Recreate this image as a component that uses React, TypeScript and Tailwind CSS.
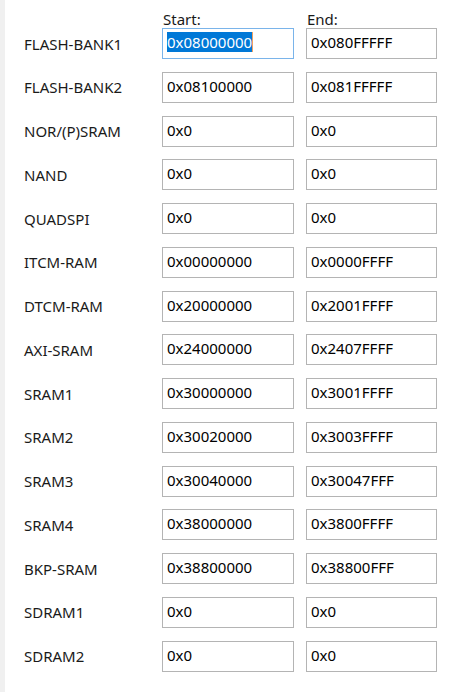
import React from 'react';

const rows: { name: string; start: string; end: string }[] = [
  { name: 'FLASH-BANK1', start: '0x08000000', end: '0x080FFFFF' },
  { name: 'FLASH-BANK2', start: '0x08100000', end: '0x081FFFFF' },
  { name: 'NOR/(P)SRAM', start: '0x0', end: '0x0' },
  { name: 'NAND', start: '0x0', end: '0x0' },
  { name: 'QUADSPI', start: '0x0', end: '0x0' },
  { name: 'ITCM-RAM', start: '0x00000000', end: '0x0000FFFF' },
  { name: 'DTCM-RAM', start: '0x20000000', end: '0x2001FFFF' },
  { name: 'AXI-SRAM', start: '0x24000000', end: '0x2407FFFF' },
  { name: 'SRAM1', start: '0x30000000', end: '0x3001FFFF' },
  { name: 'SRAM2', start: '0x30020000', end: '0x3003FFFF' },
  { name: 'SRAM3', start: '0x30040000', end: '0x30047FFF' },
  { name: 'SRAM4', start: '0x38000000', end: '0x3800FFFF' },
  { name: 'BKP-SRAM', start: '0x38800000', end: '0x38800FFF' },
  { name: 'SDRAM1', start: '0x0', end: '0x0' },
  { name: 'SDRAM2', start: '0x0', end: '0x0' },
];

const Field: React.FC<{ value: string; focused?: boolean; wide?: boolean }> = ({ value, focused, wide }) => (
  <div
    className={`h-[31px] ${wide ? 'w-[132px]' : 'w-[131px]'} border bg-white pl-[4px] pt-[3px] text-[15px] leading-[20px] text-black ${
      focused ? 'border-[#7ab4ea]' : 'border-[#b4b4b4]'
    }`}
  >
    {focused ? (
      <span className="inline-flex">
        <span className="bg-[#0078d7] text-white">{value}</span>
        <span className="w-px bg-[#f0a060]" />
      </span>
    ) : (
      value
    )}
  </div>
);

const App: React.FC = () => {
  return (
    <div className="flex h-[692px] w-[475px] bg-white" style={{ fontFamily: '"Noto Sans", "Open Sans", sans-serif' }}>
      <div className="h-full w-[5px] bg-[#f0f0f0]" />
      <div className="flex flex-col pl-[19px]">
        <div className="flex h-[28px] items-start pt-[12px] text-[15px] leading-[15px] text-[#1a1a1a]">
          <div className="w-[139px]" />
          <div className="w-[144px]">Start:</div>
          <div>End:</div>
        </div>
        <div className="flex flex-col gap-[12.78px]">
          {rows.map((r, i) => (
            <div key={r.name} className="flex items-center">
              <div className="w-[138px] text-[15px] leading-[20px] text-[#1a1a1a]">{r.name}</div>
              <Field value={r.start} focused={i === 0} wide />
              <div className="w-[12px]" />
              <Field value={r.end} />
            </div>
          ))}
        </div>
      </div>
    </div>
  );
};

export default App;
